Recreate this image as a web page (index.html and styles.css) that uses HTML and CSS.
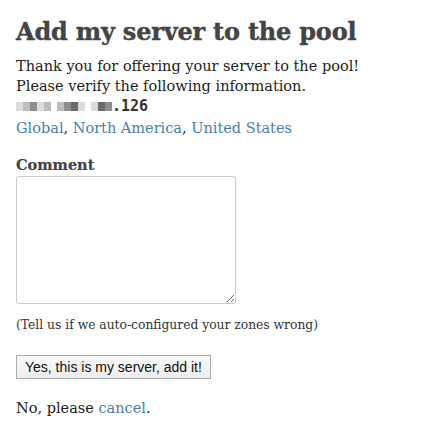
FILE: index.html
```html
<!DOCTYPE html>
<html>
<head>
<meta charset="utf-8">
<link rel="stylesheet" href="styles.css">
</head>
<body>
<main class="page">
  <h1 class="title">Add my server to the pool</h1>
  <p class="intro">Thank you for offering your server to the pool!<br>Please verify the following information.</p>
  <div class="server">
    <div class="ip"><span class="blur"><i class="px p1"></i><i class="px p2"></i><i class="px p3"></i><i class="px p1"></i><i class="px p2"></i><i class="gap"></i><i class="px p2"></i><i class="px p3"></i><i class="px p4"></i><i class="px p1"></i><i class="gap"></i><i class="px p1"></i><i class="px p4"></i><i class="px p3"></i></span>.126</div>
    <div class="zones"><a href="#">Global</a>, <a href="#">North America</a>, <a href="#">United States</a></div>
  </div>
  <form class="form">
    <label class="label" for="comment">Comment</label>
    <textarea id="comment" class="comment"></textarea>
    <p class="hint">(Tell us if we auto-configured your zones wrong)</p>
    <button type="button" class="submit">Yes, this is my server, add it!</button>
  </form>
  <p class="cancel">No, please <a href="#">cancel</a>.</p>
</main>
</body>
</html>
```
FILE: styles.css
```css
html, body { margin: 0; padding: 0; background: #fff; }
body { font-family: "DejaVu Serif", Georgia, serif; color: #222; }
.page { padding: 16px 16px 0 16px; }
.title {
  margin: 0;
  font-family: "DejaVu Serif", serif;
  font-weight: 900;
  font-size: 24px;
  line-height: 32px;
  color: #444;
  letter-spacing: -0.2px;
  -webkit-text-stroke: 0.4px #444;
}
.intro { margin: 8px 0 0; font-size: 14.5px; line-height: 20px; color: #222; }
.server { margin-top: 0; }
.ip { font-family: "DejaVu Sans Mono", monospace; font-weight: bold; font-size: 15px; line-height: 20px; color: #333; display: flex; align-items: center; }
.blur { display: inline-flex; align-items: center; height: 10px; margin-right: 0; }
.px { display: inline-block; width: 7px; height: 9px; }
.gap { display: inline-block; width: 6px; }
.p1 { background: #dcdcdc; }
.p2 { background: #bdbdbd; }
.p3 { background: #8e8e8e; }
.p4 { background: #6a6a6a; }
.zones { margin-top: 2px; font-size: 14.5px; line-height: 20px; color: #222; }
a { color: #4b7eae; text-decoration: none; }
.form { margin-top: 18px; }
.label { display: block; font-weight: bold; font-size: 14.5px; line-height: 18px; color: #444; -webkit-text-stroke: 0.2px #444; }
.comment {
  display: block;
  margin-top: 2px;
  width: 220px;
  height: 128px;
  box-sizing: border-box;
  border: 1px solid #ccc;
  border-radius: 3px;
  padding: 4px;
  resize: both;
}
.hint { margin: 13px 0 0; font-size: 12.3px; line-height: 16px; color: #333; }
.submit {
  display: block;
  margin-top: 22px;
  height: 24px;
  padding: 0 8px;
  font-family: "Liberation Sans", Arial, sans-serif;
  font-size: 14px;
  color: #111;
  background: linear-gradient(#fafafa, #ececec);
  border: 1px solid #aaa;
  border-radius: 0;
}
.cancel { margin: 19px 0 0; font-size: 14.5px; line-height: 20px; color: #222; }
```
